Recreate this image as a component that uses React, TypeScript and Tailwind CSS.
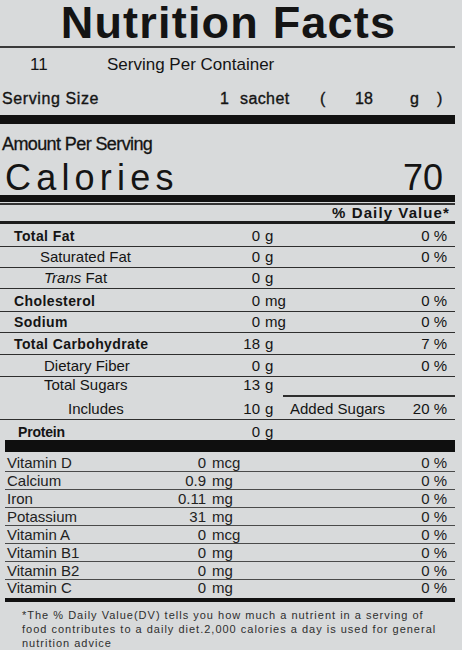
import React from "react";

interface Row {
  label: React.ReactNode;
  indent: string;
  bold?: boolean;
  num: string;
  unit: string;
  dv?: string;
  extra?: string;
  h: string;
  line?: "full" | "none";
}

const rows: Row[] = [
  { label: "Total Fat", indent: "pl-[14px]", bold: true, num: "0", unit: "g", dv: "0 %", h: "h-[23px]" },
  { label: "Saturated Fat", indent: "pl-[40px]", num: "0", unit: "g", dv: "0 %", h: "h-[21px]" },
  {
    label: (
      <>
        <i>Trans</i> Fat
      </>
    ),
    indent: "pl-[44px]",
    num: "0",
    unit: "g",
    h: "h-[21px]",
  },
  { label: "Cholesterol", indent: "pl-[14px]", bold: true, num: "0", unit: "mg", dv: "0 %", h: "h-[23px]" },
  { label: "Sodium", indent: "pl-[14px]", bold: true, num: "0", unit: "mg", dv: "0 %", h: "h-[21px]" },
  { label: "Total Carbohydrate", indent: "pl-[14px]", bold: true, num: "18", unit: "g", dv: "7 %", h: "h-[22px]" },
  { label: "Dietary Fiber", indent: "pl-[44px]", num: "0", unit: "g", dv: "0 %", h: "h-[22px]" },
  { label: "Total Sugars", indent: "pl-[44px]", num: "13", unit: "g", h: "h-[18.5px]", line: "none" },
];

const vitamins = [
  { name: "Vitamin D", num: "0", unit: "mcg", h: "h-[20px]" },
  { name: "Calcium", num: "0.9", unit: "mg", h: "h-[18px]" },
  { name: "Iron", num: "0.11", unit: "mg", h: "h-[18px]" },
  { name: "Potassium", num: "31", unit: "mg", h: "h-[18px]" },
  { name: "Vitamin A", num: "0", unit: "mcg", h: "h-[18px]" },
  { name: "Vitamin B1", num: "0", unit: "mg", h: "h-[18px]" },
  { name: "Vitamin B2", num: "0", unit: "mg", h: "h-[18px]" },
];

function NutrientRow({ row }: { row: Row }) {
  return (
    <div
      className={`flex items-end ${row.h} pb-[2px] leading-[16px] ${
        row.line === "none" ? "" : "border-b-[1.5px] border-[#2e2e2e]"
      }`}
    >
      <div
        className={`w-[230px] ${row.indent} ${
          row.bold ? "text-[14px] font-bold tracking-[0.4px]" : "text-[15px]"
        }`}
      >
        {row.label}
      </div>
      <div className="w-[30px] text-right text-[15px]">{row.num}</div>
      <div className="w-[30px] pl-[5px] text-[15px]">{row.unit}</div>
      <div className="flex-1 text-[15px]">{row.extra}</div>
      <div className="pr-[8px] text-right text-[15px]">{row.dv}</div>
    </div>
  );
}

export default function App() {
  return (
    <div className="w-[462px] h-[650px] overflow-hidden bg-[#d8dadb] text-[#141414] font-['Liberation_Sans',Arial,sans-serif]">
      <div className="w-[455px]">
        {/* header */}
        <div className="h-[48px] border-b-2 border-[#3a3a3a] text-center text-[45px] font-bold leading-[45px] tracking-[1.2px] pl-[2px]">
          Nutrition Facts
        </div>

        <div className="flex h-[32px] items-center text-[17px] leading-[32px] pt-[1px]">
          <span className="w-[107px] pl-[30px]">11</span>
          <span>Serving Per Container</span>
        </div>

        <div className="flex h-[35px] pt-[2px] text-[16px] leading-[33px] [-webkit-text-stroke:0.35px]">
          <span className="w-[220px] pl-[2px] tracking-[0.6px]">Serving Size</span>
          <span className="w-[20px]">1</span>
          <span className="w-[80px] tracking-[0.4px]">sachet</span>
          <span className="w-[35px]">(</span>
          <span className="w-[55px]">18</span>
          <span className="w-[27px]">g</span>
          <span>)</span>
        </div>

        <div className="h-[9px] bg-[#111]" />

        {/* calories */}
        <div className="h-[31px] pt-[10px] pl-[2px] text-[18px] leading-[20px] tracking-[-0.6px] [-webkit-text-stroke:0.3px]">
          Amount Per Serving
        </div>
        <div className="flex h-[40px] justify-between pt-[6px] text-[36px] leading-[34px]">
          <span className="pl-[5px] tracking-[5.2px]">Calories</span>
          <span className="pr-[12px]">70</span>
        </div>
        <div className="h-[7px] bg-[#111]" />
        <div className="h-[1px]" />
        <div className="h-[2px] bg-[#333]" />

        <div className="h-[16px] pr-[5px] text-right text-[15px] font-bold leading-[16px] tracking-[1.1px]">
          % Daily Value*
        </div>
        <div className="h-[2.5px] bg-[#1c1c1c]" />

        {/* nutrients */}
        {rows.map((row, i) => (
          <NutrientRow key={i} row={row} />
        ))}
        <div className="ml-[283px] h-[1.5px] bg-[#2e2e2e]" />
        <NutrientRow
          row={{
            label: "Includes",
            indent: "pl-[68px]",
            num: "10",
            unit: "g",
            extra: "Added Sugars",
            dv: "20 %",
            h: "h-[23px]",
          }}
        />
        <div className="flex h-[20px] items-end leading-[16px]">
          <div className="w-[230px] pl-[18px] text-[14px] font-bold tracking-[-0.2px]">Protein</div>
          <div className="w-[30px] text-right text-[15px]">0</div>
          <div className="pl-[5px] text-[15px]">g</div>
        </div>

        <div className="ml-[5px] h-[12px] bg-[#0f0f0f]" />

        {/* vitamins & minerals */}
        <div className="ml-[5px] text-[15px] leading-[15px] text-[#222]">
          {vitamins.map((v) => (
            <div
              key={v.name}
              className={`flex items-end ${v.h} border-b-[1.5px] border-[#4a4a4a] pb-[1px]`}
            >
              <div className="w-[171px] pl-[2px]">{v.name}</div>
              <div className="w-[30px] text-right">{v.num}</div>
              <div className="flex-1 pl-[6px]">{v.unit}</div>
              <div className="pr-[8px] text-right">0 %</div>
            </div>
          ))}
          <div className="flex h-[18px] items-end pb-[3px]">
            <div className="w-[171px] pl-[2px]">Vitamin C</div>
            <div className="w-[30px] text-right">0</div>
            <div className="flex-1 pl-[6px]">mg</div>
            <div className="pr-[8px] text-right">0 %</div>
          </div>
        </div>
        <div className="ml-[5px] h-[4px] bg-[#111]" />

        {/* footnote */}
        <p className="pl-[22px] pt-[6px] text-[11px] leading-[14px] tracking-[1px] text-[#2e2e2e]">
          *The % Daily Value(DV) tells you how much a nutrient in a serving of
          <br />
          food contributes to a daily diet.2,000 calories a day is used for general
          <br />
          nutrition advice
        </p>
      </div>
    </div>
  );
}
